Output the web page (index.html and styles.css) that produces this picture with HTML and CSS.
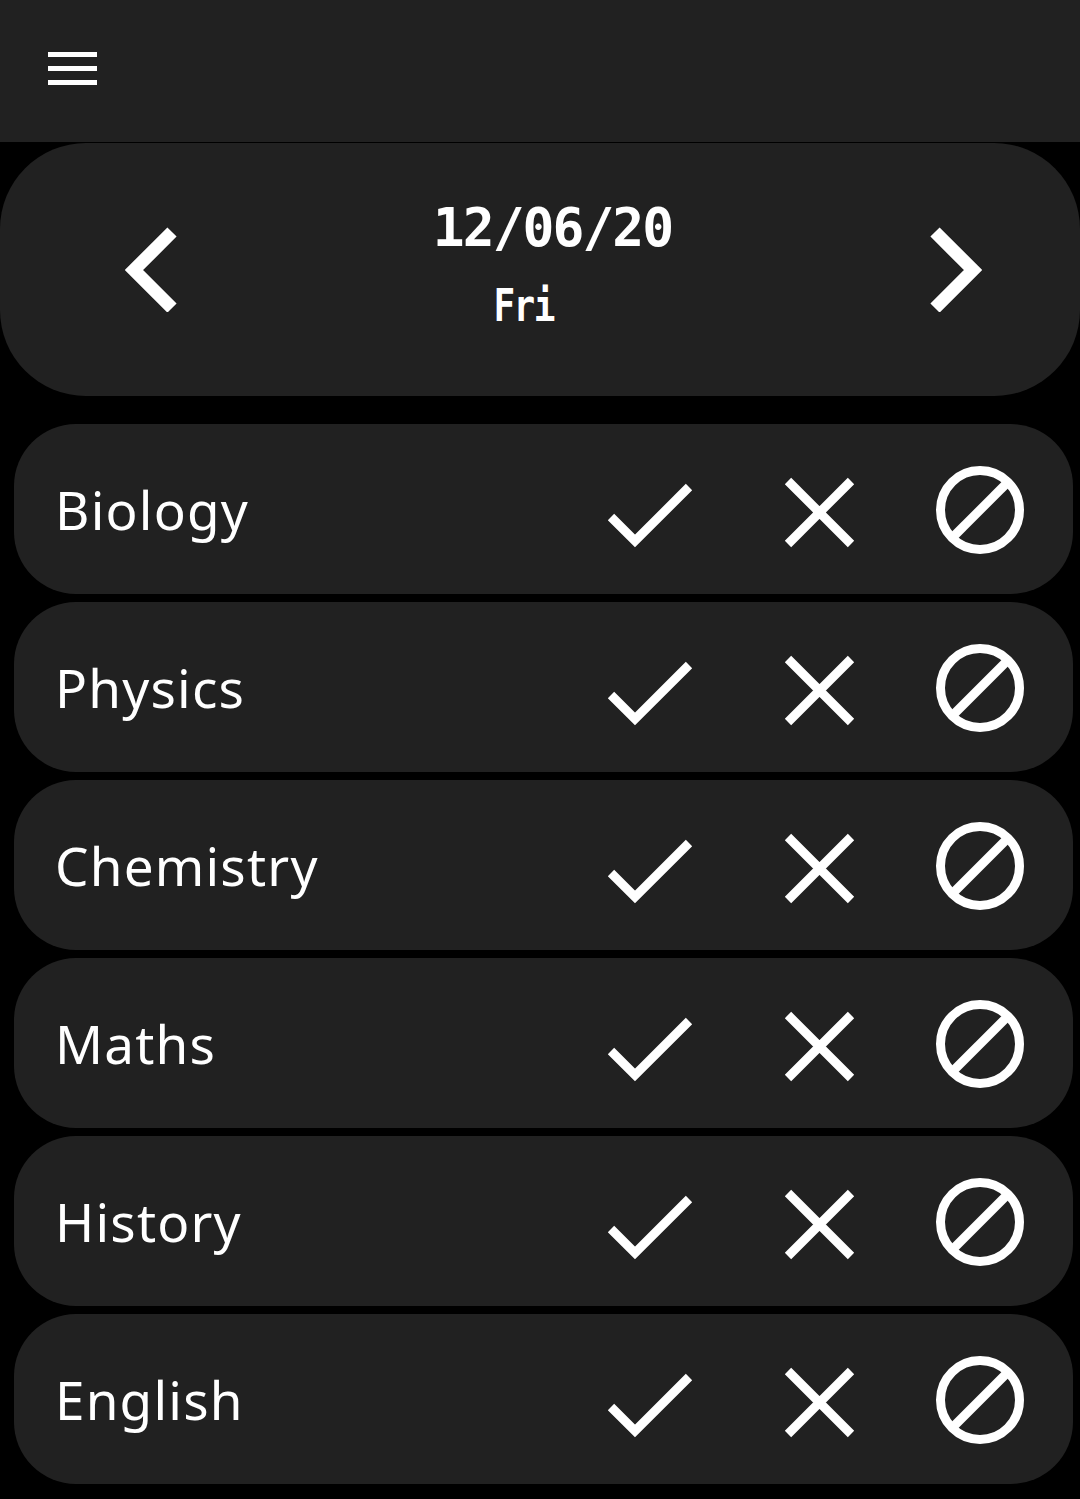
FILE: index.html
```html
<!DOCTYPE html>
<html lang="en">
<head>
<meta charset="utf-8">
<title>Attendance</title>
<link rel="stylesheet" href="styles.css">
</head>
<body>
<header class="topbar">
  <div class="menu"><span></span><span></span><span></span></div>
</header>

<section class="datecard">
  <svg class="chev" width="53" height="85" viewBox="0 0 53 85"><polyline points="47,5 9,43 47,81" fill="none" stroke="#fff" stroke-width="13" stroke-linejoin="miter"/></svg>
  <div class="datetext">
    <div class="date">12/06/20</div>
    <div class="day">Fri</div>
  </div>
  <svg class="chev" width="53" height="85" viewBox="0 0 53 85"><polyline points="6,5 44,43 6,81" fill="none" stroke="#fff" stroke-width="13" stroke-linejoin="miter"/></svg>
</section>

<main class="list">
  <div class="row"><span class="subject">Biology</span>
    <svg class="ic ic-check" width="90" height="90" viewBox="0 0 90 90"><polyline points="6,53 30,77 84,23" fill="none" stroke="#fff" stroke-width="9"/></svg>
    <svg class="ic ic-x" width="90" height="90" viewBox="0 0 90 90"><path d="M14 17 L77 80 M77 17 L14 80" stroke="#fff" stroke-width="9"/></svg>
    <svg class="ic ic-no" width="90" height="90" viewBox="0 0 90 90"><circle cx="45" cy="46" r="39.5" fill="none" stroke="#fff" stroke-width="9"/><path d="M73 18 L17 74" stroke="#fff" stroke-width="9"/></svg>
  </div>
  <div class="row"><span class="subject">Physics</span>
    <svg class="ic ic-check" width="90" height="90" viewBox="0 0 90 90"><polyline points="6,53 30,77 84,23" fill="none" stroke="#fff" stroke-width="9"/></svg>
    <svg class="ic ic-x" width="90" height="90" viewBox="0 0 90 90"><path d="M14 17 L77 80 M77 17 L14 80" stroke="#fff" stroke-width="9"/></svg>
    <svg class="ic ic-no" width="90" height="90" viewBox="0 0 90 90"><circle cx="45" cy="46" r="39.5" fill="none" stroke="#fff" stroke-width="9"/><path d="M73 18 L17 74" stroke="#fff" stroke-width="9"/></svg>
  </div>
  <div class="row"><span class="subject">Chemistry</span>
    <svg class="ic ic-check" width="90" height="90" viewBox="0 0 90 90"><polyline points="6,53 30,77 84,23" fill="none" stroke="#fff" stroke-width="9"/></svg>
    <svg class="ic ic-x" width="90" height="90" viewBox="0 0 90 90"><path d="M14 17 L77 80 M77 17 L14 80" stroke="#fff" stroke-width="9"/></svg>
    <svg class="ic ic-no" width="90" height="90" viewBox="0 0 90 90"><circle cx="45" cy="46" r="39.5" fill="none" stroke="#fff" stroke-width="9"/><path d="M73 18 L17 74" stroke="#fff" stroke-width="9"/></svg>
  </div>
  <div class="row"><span class="subject">Maths</span>
    <svg class="ic ic-check" width="90" height="90" viewBox="0 0 90 90"><polyline points="6,53 30,77 84,23" fill="none" stroke="#fff" stroke-width="9"/></svg>
    <svg class="ic ic-x" width="90" height="90" viewBox="0 0 90 90"><path d="M14 17 L77 80 M77 17 L14 80" stroke="#fff" stroke-width="9"/></svg>
    <svg class="ic ic-no" width="90" height="90" viewBox="0 0 90 90"><circle cx="45" cy="46" r="39.5" fill="none" stroke="#fff" stroke-width="9"/><path d="M73 18 L17 74" stroke="#fff" stroke-width="9"/></svg>
  </div>
  <div class="row"><span class="subject">History</span>
    <svg class="ic ic-check" width="90" height="90" viewBox="0 0 90 90"><polyline points="6,53 30,77 84,23" fill="none" stroke="#fff" stroke-width="9"/></svg>
    <svg class="ic ic-x" width="90" height="90" viewBox="0 0 90 90"><path d="M14 17 L77 80 M77 17 L14 80" stroke="#fff" stroke-width="9"/></svg>
    <svg class="ic ic-no" width="90" height="90" viewBox="0 0 90 90"><circle cx="45" cy="46" r="39.5" fill="none" stroke="#fff" stroke-width="9"/><path d="M73 18 L17 74" stroke="#fff" stroke-width="9"/></svg>
  </div>
  <div class="row"><span class="subject">English</span>
    <svg class="ic ic-check" width="90" height="90" viewBox="0 0 90 90"><polyline points="6,53 30,77 84,23" fill="none" stroke="#fff" stroke-width="9"/></svg>
    <svg class="ic ic-x" width="90" height="90" viewBox="0 0 90 90"><path d="M14 17 L77 80 M77 17 L14 80" stroke="#fff" stroke-width="9"/></svg>
    <svg class="ic ic-no" width="90" height="90" viewBox="0 0 90 90"><circle cx="45" cy="46" r="39.5" fill="none" stroke="#fff" stroke-width="9"/><path d="M73 18 L17 74" stroke="#fff" stroke-width="9"/></svg>
  </div>
</main>
</body>
</html>
```

FILE: styles.css
```css
* { box-sizing: border-box; }
html, body {
  margin: 0;
  padding: 0;
  background: #000;
  color: #fff;
  font-family: "Noto Sans", "DejaVu Sans", sans-serif;
}
body { width: 1080px; height: 1499px; overflow: hidden; }

.topbar {
  height: 142px;
  background: #212121;
  padding: 52px 0 0 48px;
}
.menu {
  display: flex;
  flex-direction: column;
  gap: 9px;
  width: 49px;
}
.menu span {
  display: block;
  height: 5px;
  background: #fff;
}

.datecard {
  margin-top: 1px;
  height: 253px;
  background: #212121;
  border-radius: 86px;
  display: flex;
  align-items: center;
  padding: 0 98px 0 125px;
}
.chev { flex: none; display: block; }
.datetext {
  flex: 1;
  display: flex;
  flex-direction: column;
  align-items: center;
  font-family: "DejaVu Sans Mono", monospace;
  font-weight: bold;
  margin-top: -10px;
}
.date {
  font-size: 53px;
  line-height: 62px;
  letter-spacing: -2px;
  margin-left: -2px;
}
.day {
  font-size: 45px;
  line-height: 54px;
  margin-top: 20px;
  letter-spacing: -2px;
  margin-right: 60px;
  transform: scaleX(0.8);
}

.list {
  padding: 28px 7px 0 14px;
  display: flex;
  flex-direction: column;
  gap: 8px;
}
.row {
  height: 170px;
  background: #212121;
  border-radius: 62px;
  display: flex;
  align-items: center;
  padding: 0 48px 0 41px;
}
.subject {
  flex: 1;
  font-size: 53px;
  letter-spacing: 1.2px;
  line-height: 1;
}
.ic { flex: none; display: block; }
.ic-x { margin-left: 79px; }
.ic-no { margin-left: 71px; }
```
